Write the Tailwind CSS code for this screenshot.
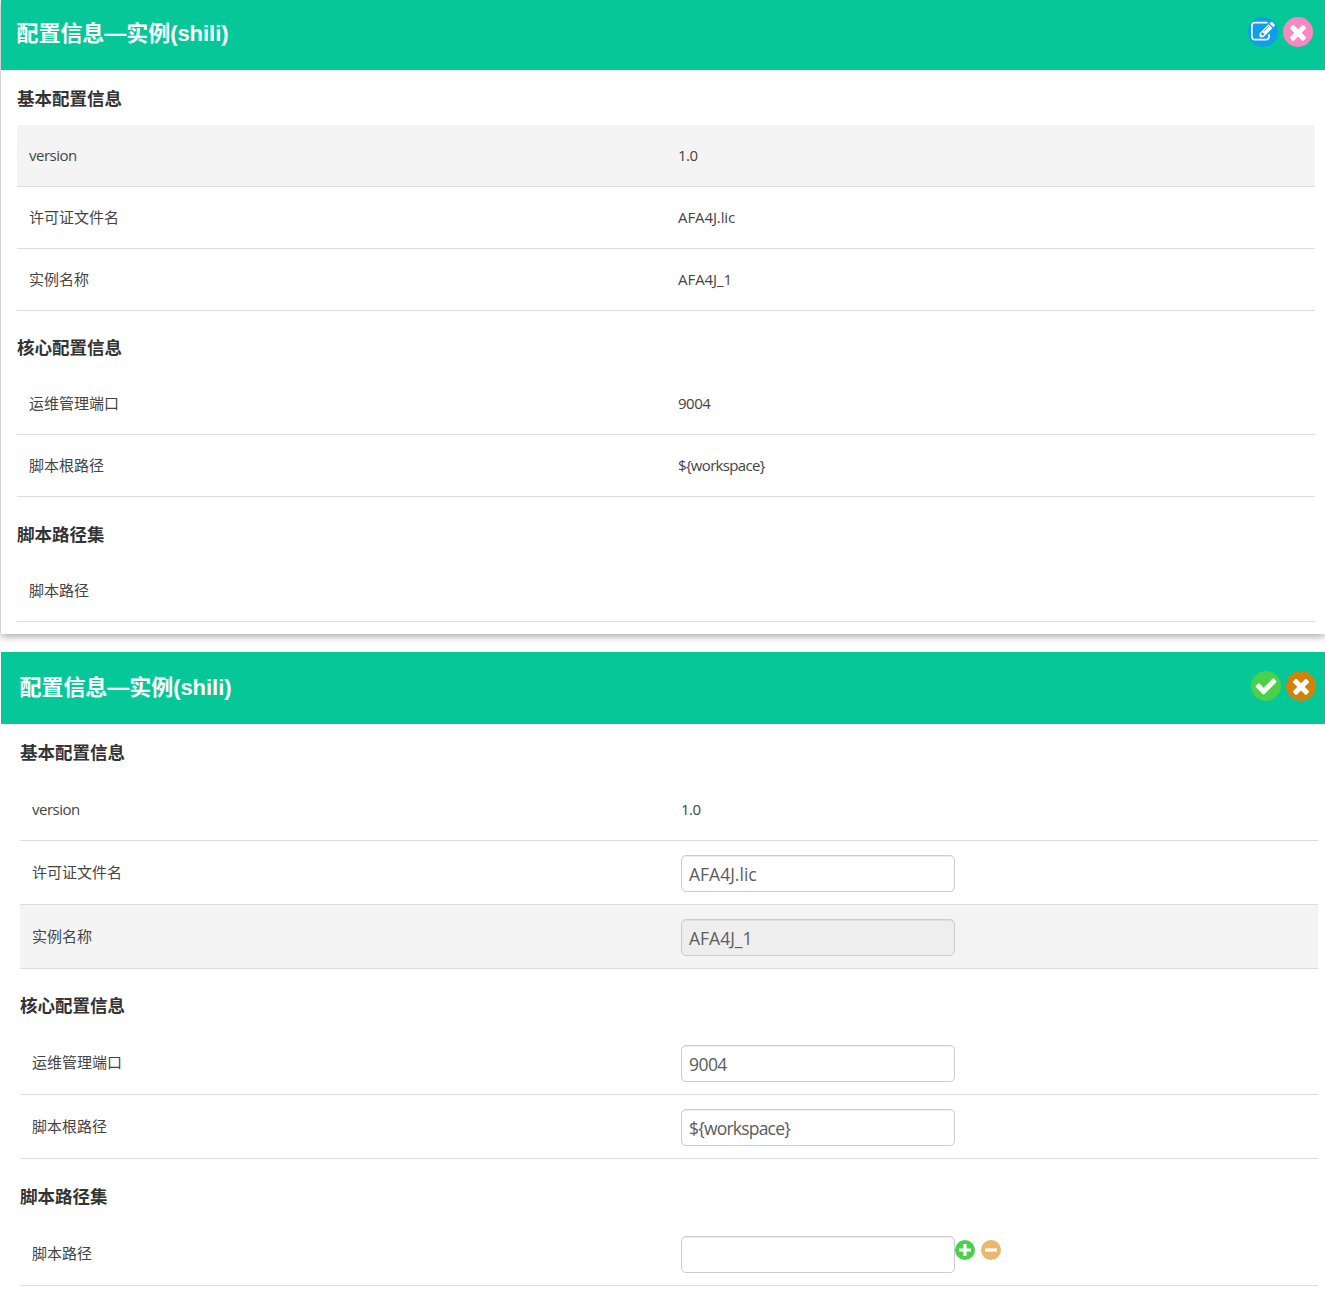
<!DOCTYPE html>
<html lang="zh-CN">
<head>
<meta charset="utf-8">
<title>配置信息</title>
<script src="https://cdn.jsdelivr.net/npm/@tailwindcss/browser@4"></script>
</head>
<body class="h-[1300px] overflow-hidden bg-white font-['Open_Sans','Noto_Sans_CJK_SC',sans-serif] text-[15px] leading-5 text-[#444]">
<svg class="hidden">
  <symbol id="times" viewBox="0 0 1792 1792"><path d="M1490 1322q0 40-28 68l-136 136q-28 28-68 28t-68-28l-294-294-294 294q-28 28-68 28t-68-28l-136-136q-28-28-28-68t28-68l294-294-294-294q-28-28-28-68t28-68l136-136q28-28 68-28t68 28l294 294 294-294q28-28 68-28t68 28l136 136q28 28 28 68t-28 68l-294 294 294 294q28 28 28 68z"/></symbol>
  <symbol id="check" viewBox="0 0 1792 1792"><path d="M1671 566q0 40-28 68l-724 724-136 136q-28 28-68 28t-68-28l-136-136-362-362q-28-28-28-68t28-68l136-136q28-28 68-28t68 28l294 295 656-657q28-28 68-28t68 28l136 136q28 28 28 68z"/></symbol>
  <symbol id="edit" viewBox="0 0 1792 1792"><path d="M888 1184l116-116-152-152-116 116v56h96v96h56zm440-720q-16-16-33 1l-350 350q-17 17-1 33t33-1l350-350q17-17 1-33zm80 594v190q0 119-84.5 203.500t-203.500 84.500h-832q-119 0-203.500-84.500t-84.500-203.500v-832q0-119 84.500-203.500t203.500-84.500h832q63 0 117 25 15 7 18 23 3 17-9 29l-49 49q-14 14-32 8-23-6-45-6h-832q-66 0-113 47t-47 113v832q0 66 47 113t113 47h832q66 0 113-47t47-113v-126q0-13 9-22l64-64q15-15 35-7t20 29zm-96-738l288 288-672 672h-288v-288zm444 132l-92 92-288-288 92-92q28-28 68-28t68 28l152 152q28 28 28 68t-28 68z"/></symbol>
</svg>

<section class="ml-px h-[634px] bg-white shadow-[0_2px_8px_rgba(0,0,0,0.38)]">
  <header class="flex h-[70px] justify-between bg-[#06c798] pl-[15.5px] pr-3">
    <h1 class="pt-[18px] font-['Liberation_Sans','Noto_Sans_CJK_SC',sans-serif] text-[22px] font-bold leading-8 tracking-[-0.05px] text-white">配置信息—实例(shili)</h1>
    <div class="flex gap-[5px] pt-[16.5px]">
      <button class="flex size-[30px] items-center justify-center rounded-full bg-[#109de9] text-white"><svg class="size-6 fill-current"><use href="#edit"/></svg></button>
      <button class="flex size-[30px] items-center justify-center rounded-full bg-[#fa87c3] text-white"><svg class="size-6 fill-current"><use href="#times"/></svg></button>
    </div>
  </header>
  <div class="pl-4 pr-[10px]">
    <h2 class="h-[55px] pt-[18px] text-[17.5px] font-bold text-[#333]">基本配置信息</h2>
    <div class="grid h-[62px] grid-cols-2 items-center border-b border-[#ddd] bg-[#f4f4f4] pb-0.5"><div class="pl-3"><span class="tracking-[-0.5px]">version</span></div><div class="pl-3 tracking-[-0.5px]">1.0</div></div>
    <div class="grid h-[62px] grid-cols-2 items-center border-b border-[#ddd] pb-0.5"><div class="pl-3">许可证文件名</div><div class="pl-3 tracking-[-0.1px]">AFA4J.lic</div></div>
    <div class="grid h-[62px] grid-cols-2 items-center border-b border-[#ddd] pb-0.5"><div class="pl-3">实例名称</div><div class="pl-3 tracking-[-0.05px]">AFA4J_1</div></div>
    <h2 class="h-[62px] pt-[26px] text-[17.5px] font-bold text-[#333]">核心配置信息</h2>
    <div class="grid h-[62px] grid-cols-2 items-center border-b border-[#ddd] pb-0.5"><div class="pl-3">运维管理端口</div><div class="pl-3 tracking-[-0.5px]">9004</div></div>
    <div class="grid h-[62px] grid-cols-2 items-center border-b border-[#ddd] pb-0.5"><div class="pl-3">脚本根路径</div><div class="pl-3 tracking-[-0.68px]">${workspace}</div></div>
    <h2 class="h-[63px] pt-[27px] text-[17.5px] font-bold text-[#333]">脚本路径集</h2>
    <div class="grid h-[62px] grid-cols-2 items-center border-b border-[#ddd] pb-0.5"><div class="pl-3">脚本路径</div><div></div></div>
  </div>
</section>

<section class="ml-px mt-[18px]">
  <header class="flex h-[72px] justify-between bg-[#06c798] pl-[18.5px] pr-[9px]">
    <h1 class="pt-[20px] font-['Liberation_Sans','Noto_Sans_CJK_SC',sans-serif] text-[22px] font-bold leading-8 tracking-[-0.05px] text-white">配置信息—实例(shili)</h1>
    <div class="flex gap-[5px] pt-[18.5px]">
      <button class="flex size-[30px] items-center justify-center rounded-full bg-[#4bd04b] text-white"><svg class="size-6 fill-current"><use href="#check"/></svg></button>
      <button class="flex size-[30px] items-center justify-center rounded-full bg-[#cf820c] text-white"><svg class="size-6 fill-current"><use href="#times"/></svg></button>
    </div>
  </header>
  <div class="pl-[19px] pr-[7px]">
    <h2 class="h-[55px] pt-[18px] text-[17.5px] font-bold text-[#333]">基本配置信息</h2>
    <div class="grid h-[62px] grid-cols-2 items-center border-b border-[#ddd] pb-0.5"><div class="pl-3"><span class="tracking-[-0.5px]">version</span></div><div class="pl-3 tracking-[-0.5px]">1.0</div></div>
    <div class="grid h-16 grid-cols-2 items-center border-b border-[#ddd]"><div class="pb-0.5 pl-3">许可证文件名</div><div class="pl-3 pt-px"><input class="block h-[37px] w-[274px] rounded-[5px] border border-[#ccc] bg-white px-[7px] pt-[2px] text-[17.5px] text-[#5c5c5c] shadow-[inset_0_1px_1px_rgba(0,0,0,0.075)]" value="AFA4J.lic"></div></div>
    <div class="grid h-16 grid-cols-2 items-center border-b border-[#ddd] bg-[#f4f4f4]"><div class="pb-0.5 pl-3">实例名称</div><div class="pl-3 pt-px"><input class="block h-[37px] w-[274px] rounded-[5px] border border-[#ccc] bg-[#eee] px-[7px] pt-[2px] text-[17.5px] text-[#5c5c5c] shadow-[inset_0_1px_1px_rgba(0,0,0,0.075)]" value="AFA4J_1" readonly></div></div>
    <h2 class="h-[62px] pt-[26px] text-[17.5px] font-bold text-[#333]">核心配置信息</h2>
    <div class="grid h-16 grid-cols-2 items-center border-b border-[#ddd]"><div class="pb-0.5 pl-3">运维管理端口</div><div class="pl-3 pt-px"><input class="block h-[37px] w-[274px] rounded-[5px] border border-[#ccc] bg-white px-[7px] pt-[2px] text-[17.5px] tracking-[-0.55px] text-[#5c5c5c] shadow-[inset_0_1px_1px_rgba(0,0,0,0.075)]" value="9004"></div></div>
    <div class="grid h-16 grid-cols-2 items-center border-b border-[#ddd]"><div class="pb-0.5 pl-3">脚本根路径</div><div class="pl-3 pt-px"><input class="block h-[37px] w-[274px] rounded-[5px] border border-[#ccc] bg-white px-[7px] pt-[2px] text-[17.5px] tracking-[-0.8px] text-[#5c5c5c] shadow-[inset_0_1px_1px_rgba(0,0,0,0.075)]" value="${workspace}"></div></div>
    <h2 class="h-[63px] pt-[27px] text-[17.5px] font-bold text-[#333]">脚本路径集</h2>
    <div class="grid h-16 grid-cols-2 items-center border-b border-[#ddd]"><div class="pb-0.5 pl-3">脚本路径</div><div class="flex pl-3 pt-px"><input class="block h-[37px] w-[274px] rounded-[5px] border border-[#ccc] bg-white px-[7px] text-[17.5px] shadow-[inset_0_1px_1px_rgba(0,0,0,0.075)]">
      <svg class="mt-1 size-5" viewBox="0 0 20 20"><circle cx="10" cy="10" r="10" fill="#4bd04b"/><path d="M10 4v12M4 10h12" stroke="#fff" stroke-width="3.200"/></svg>
      <svg class="ml-1.5 mt-1 size-5" viewBox="0 0 20 20"><circle cx="10" cy="10" r="10" fill="#e9b86b"/><path d="M4 10h12" stroke="#fff" stroke-width="3.200"/></svg>
    </div></div>
  </div>
</section>
</body>
</html>
